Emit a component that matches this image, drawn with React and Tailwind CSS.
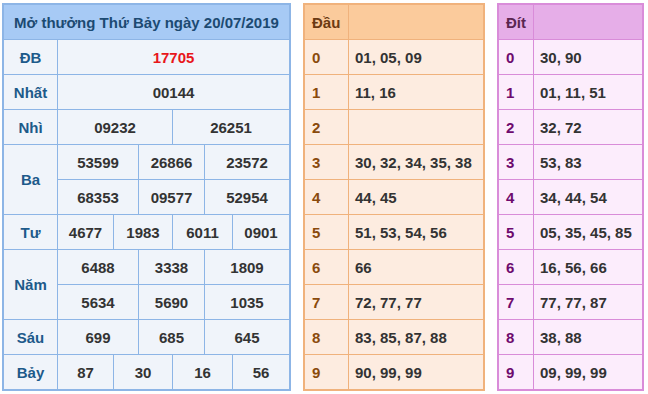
import React from "react";

const FONT = { fontFamily: '"Liberation Sans", Arial, sans-serif' };

const left = "bg-[#f0f4fa] flex items-center justify-center text-[#333]";
const lbl = "bg-[#f0f4fa] flex items-center justify-center text-[#1d5a8a]";

const dau = [
  ["0", "01, 05, 09"],
  ["1", "11, 16"],
  ["2", ""],
  ["3", "30, 32, 34, 35, 38"],
  ["4", "44, 45"],
  ["5", "51, 53, 54, 56"],
  ["6", "66"],
  ["7", "72, 77, 77"],
  ["8", "83, 85, 87, 88"],
  ["9", "90, 99, 99"],
];

const dit = [
  ["0", "30, 90"],
  ["1", "01, 11, 51"],
  ["2", "32, 72"],
  ["3", "53, 83"],
  ["4", "34, 44, 54"],
  ["5", "05, 35, 45, 85"],
  ["6", "16, 56, 66"],
  ["7", "77, 77, 87"],
  ["8", "38, 88"],
  ["9", "09, 99, 99"],
];

const Three = ({ a, b, c }) => (
  <>
    <div className={`${left} col-span-2`}>{a}</div>
    <div className={`${left} col-span-2`}>{b}</div>
    <div className={`${left} col-span-2`}>{c}</div>
  </>
);

const Four = ({ a, b, c, d }) => (
  <>
    <div className={left}>{a}</div>
    <div className={`${left} col-span-2`}>{b}</div>
    <div className={`${left} col-span-2`}>{c}</div>
    <div className={left}>{d}</div>
  </>
);

const ResultTable = () => (
  <div className="ml-[2px] mt-[3px] w-[289px] border-2 border-[#8db5e6] bg-[#8db5e6] grid grid-cols-[53px_55px_24px_33px_31px_27px_56px] auto-rows-[34px] gap-px">
    <div className="col-span-7 bg-[#a7caf5] flex items-center justify-center text-[#1c4a72]">
      Mở thưởng Thứ Bảy ngày 20/07/2019
    </div>

    <div className={lbl}>ĐB</div>
    <div className={`${left} col-span-6 text-[#e8161b]`}>17705</div>

    <div className={lbl}>Nhất</div>
    <div className={`${left} col-span-6`}>00144</div>

    <div className={lbl}>Nhì</div>
    <div className={`${left} col-span-3`}>09232</div>
    <div className={`${left} col-span-3`}>26251</div>

    <div className={`${lbl} row-span-2`}>Ba</div>
    <Three a="53599" b="26866" c="23572" />
    <Three a="68353" b="09577" c="52954" />

    <div className={lbl}>Tư</div>
    <Four a="4677" b="1983" c="6011" d="0901" />

    <div className={`${lbl} row-span-2`}>Năm</div>
    <Three a="6488" b="3338" c="1809" />
    <Three a="5634" b="5690" c="1035" />

    <div className={lbl}>Sáu</div>
    <Three a="699" b="685" c="645" />

    <div className={lbl}>Bảy</div>
    <Four a="87" b="30" c="16" d="56" />
  </div>
);

const LotoTable = ({ title, rows, width, cols, border, head, body, keyColor, headColor }) => (
  <div
    className={`mt-[3px] border-2 grid auto-rows-[34px] gap-px ${width} ${cols} ${border}`}
  >
    <div className={`${head} ${headColor} flex items-center px-[7px]`}>{title}</div>
    <div className={head}></div>
    {rows.map(([k, v]) => (
      <React.Fragment key={k}>
        <div className={`${body} ${keyColor} flex items-center px-[7px]`}>{k}</div>
        <div className={`${body} text-[#333] flex items-center px-[6px]`}>{v}</div>
      </React.Fragment>
    ))}
  </div>
);

export default function App() {
  return (
    <div
      className="w-[648px] h-[394px] bg-white flex items-start text-[15px] font-bold leading-none"
      style={FONT}
    >
      <ResultTable />
      <div className="ml-[12px]">
        <LotoTable
          title="Đầu"
          rows={dau}
          width="w-[182px]"
          cols="grid-cols-[43px_134px]"
          border="border-[#f0b27c] bg-[#f0b27c]"
          head="bg-[#fbcb9c]"
          body="bg-[#fdece0]"
          keyColor="text-[#8a4a0c]"
          headColor="text-[#6b3a12]"
        />
      </div>
      <div className="ml-[12px]">
        <LotoTable
          title="Đít"
          rows={dit}
          width="w-[147px]"
          cols="grid-cols-[34px_108px]"
          border="border-[#d98cd9] bg-[#d98cd9]"
          head="bg-[#e6aee8]"
          body="bg-[#fcedfc]"
          keyColor="text-[#6e0a6e]"
          headColor="text-[#5a2650]"
        />
      </div>
    </div>
  );
}
